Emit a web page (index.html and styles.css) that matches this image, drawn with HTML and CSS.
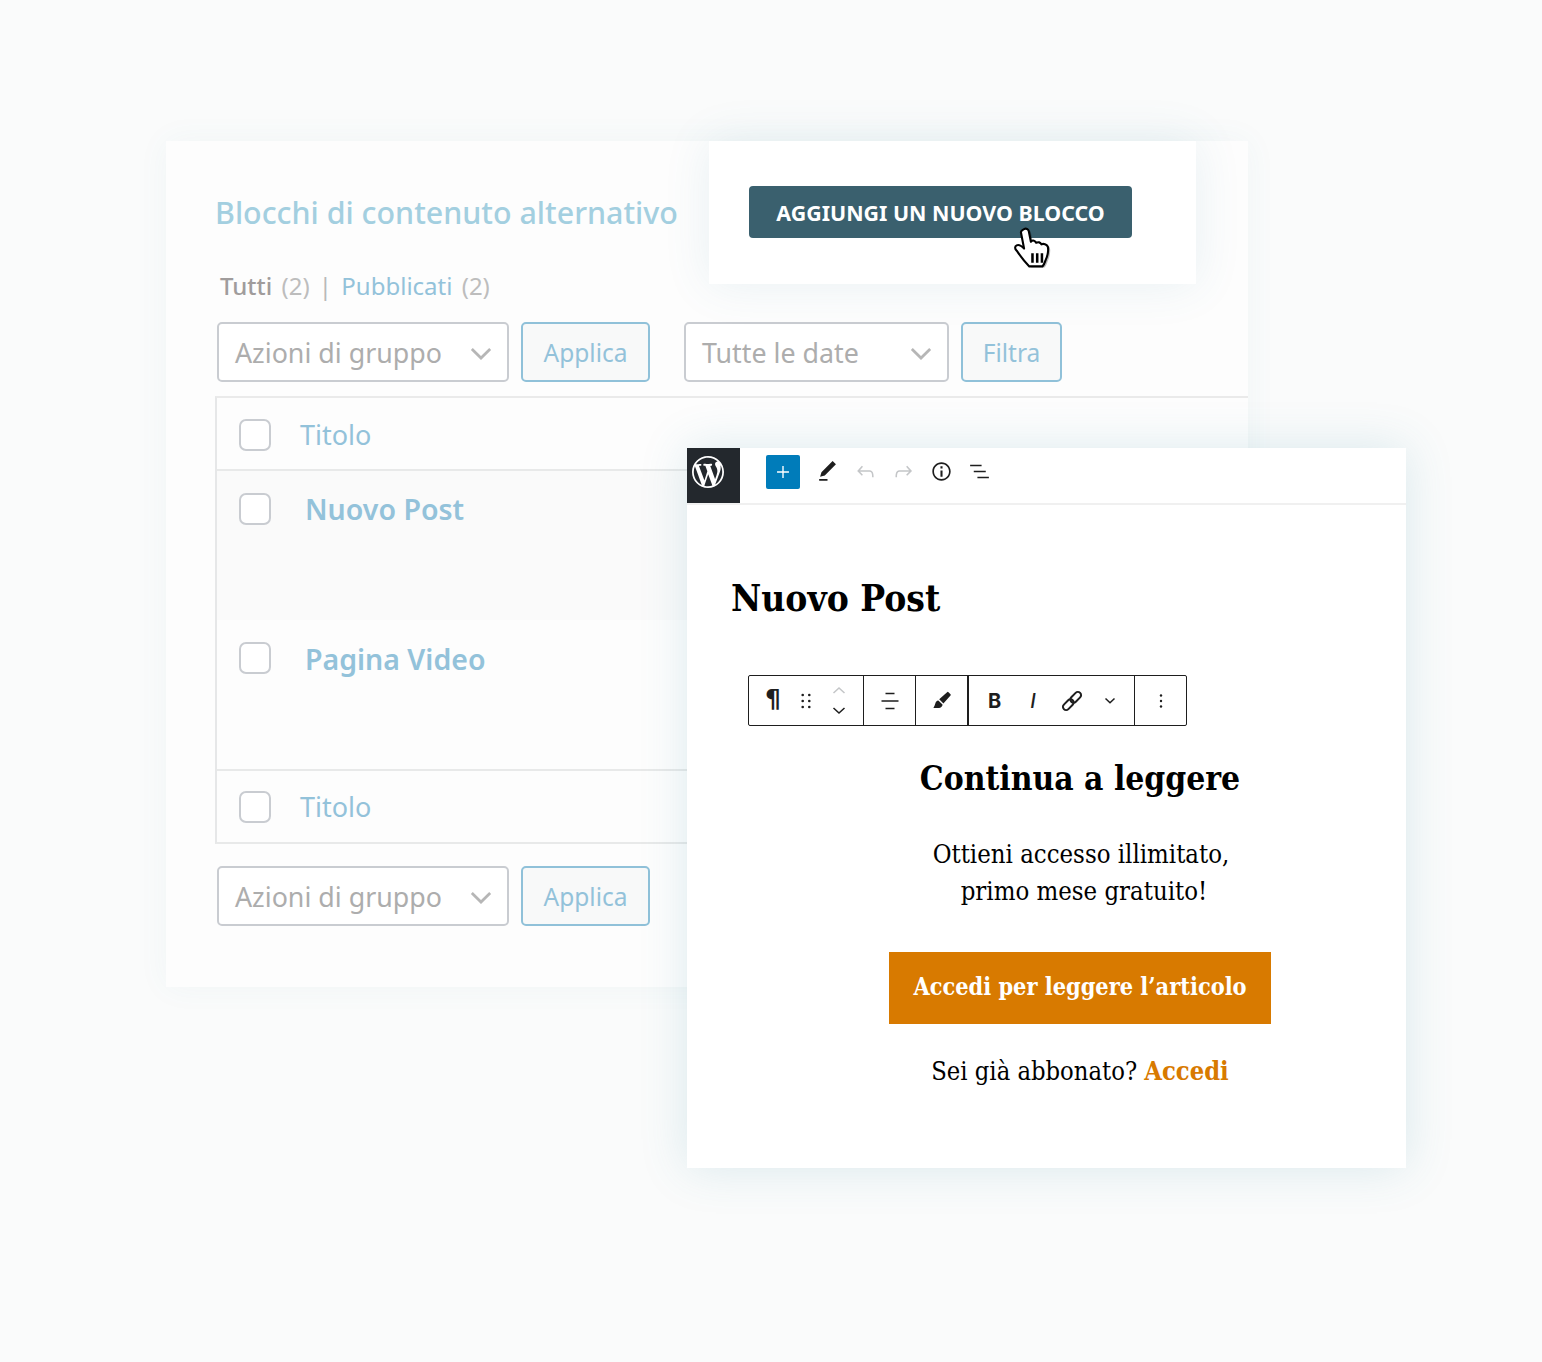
FILE: index.html
```html
<!DOCTYPE html>
<html lang="it">
<head>
  <meta charset="UTF-8" />
  <meta name="viewport" content="width=device-width, initial-scale=1" />
  <title>Blocchi di contenuto alternativo</title>
  <link rel="stylesheet" href="styles.css">
</head>
<body>
  <div class="scene">

    <!-- admin list, behind everything -->
    <div class="window list-window">
      <h1 class="list-title">Blocchi di contenuto alternativo</h1>
      <div class="views">
        <strong>Tutti</strong> <span class="count">(2)</span>
        <span class="sep">|</span>
        <a>Pubblicati</a> <span class="count">(2)</span>
      </div>

      <div class="tablenav">
        <div class="select select-actions">Azioni di gruppo
          <svg class="caret" viewBox="0 0 24 14"><path d="M2 2l10 10L22 2"/></svg>
        </div>
        <div class="btn btn-apply">Applica</div>
        <div class="select select-dates">Tutte le date
          <svg class="caret" viewBox="0 0 24 14"><path d="M2 2l10 10L22 2"/></svg>
        </div>
        <div class="btn btn-filter">Filtra</div>
      </div>

      <div class="table">
        <div class="row row-head">
          <span class="check"></span><span class="col-title">Titolo</span>
        </div>
        <div class="row row-post row-alt">
          <span class="check"></span><a class="post-title">Nuovo Post</a>
        </div>
        <div class="row row-post row-second">
          <span class="check"></span><a class="post-title">Pagina Video</a>
        </div>
        <div class="row row-foot">
          <span class="check"></span><span class="col-title">Titolo</span>
        </div>
      </div>

      <div class="tablenav tablenav-bottom">
        <div class="select select-actions">Azioni di gruppo
          <svg class="caret" viewBox="0 0 24 14"><path d="M2 2l10 10L22 2"/></svg>
        </div>
        <div class="btn btn-apply">Applica</div>
      </div>
    </div>

    <!-- add block card -->
    <div class="window add-window">
      <div class="add-button">AGGIUNGI UN NUOVO BLOCCO</div>
    </div>
    <svg class="hand" viewBox="0 0 35 39">
      <path class="hand-shadow" d="M11 3c2-1 4 0 4.500 2l2 10c2-2 4-1 5 1 2-1 4-.500 5 1.500 2-1 5 0 6 2 1 3 0 9-2 13-1 3-2 5-3 6H16c-3-3-8-9-13-15-2-2-2-4 0-5 2-1 4 0 7 3L8 6c0-1 1-2 3-3z"/>
      <path class="hand-fill" d="M9 2c2-1 4 0 4.500 2l2 10c2-2 4-1 5 1 2-1 4-.500 5 1.500 2-1 5 0 6 2 1 3 0 9-2 13-1 3-2 5-3 6H14c-3-3-8-9-12-15-2-2-2-4 0-5 2-1 4 0 7 3L6 5c0-1 1-2 3-3z"/>
      <path class="hand-lines" d="M17 25v9M21.500 25v9M26 25v9"/>
    </svg>

    <!-- block editor -->
    <div class="window editor-window">
      <div class="editor-bar">
        <div class="wp-logo">
          <svg viewBox="0 0 20 20"><path d="M20 10c0-5.510-4.490-10-10-10C4.480 0 0 4.490 0 10c0 5.520 4.480 10 10 10 5.510 0 10-4.480 10-10zM7.780 15.370L4.370 6.220c.550-.020 1.170-.080 1.170-.080.500-.060.440-1.130-.060-1.110 0 0-1.450.110-2.370.110-.180 0-.370 0-.580-.010C4.120 2.690 6.870 1.110 10 1.110c2.330 0 4.450.870 6.050 2.340-.680-.110-1.650.390-1.650 1.580 0 .740.450 1.360.900 2.100.350.610.550 1.360.550 2.460 0 1.490-1.400 5-1.400 5l-3.030-8.370c.540-.020.820-.170.820-.170.500-.050.440-1.250-.060-1.220 0 0-1.440.120-2.380.120-.870 0-2.330-.120-2.330-.120-.500-.030-.560 1.200-.060 1.220l.920.080 1.260 3.410zM17.410 10c.240-.640.740-1.870.430-4.250.700 1.290 1.050 2.710 1.050 4.250 0 3.290-1.730 6.240-4.400 7.780.970-2.590 1.940-5.200 2.920-7.780zM6.100 18.090C3.120 16.650 1.110 13.530 1.110 10c0-1.300.230-2.480.720-3.590C3.250 10.300 4.670 14.200 6.100 18.090zm4.030-6.630l2.580 6.980c-.860.290-1.760.450-2.710.450-.790 0-1.570-.110-2.290-.330.810-2.380 1.620-4.740 2.420-7.100z"/></svg>
        </div>
        <div class="bar-tools">
          <span class="add-block">
            <svg viewBox="0 0 24 24"><path d="M12 5.500v13M5.500 12h13"/></svg>
          </span>
          <svg class="bar-icon" viewBox="0 0 24 24"><path d="M20.100 5.100L16.900 2 6.200 12.700l-1.300 4.400 4.500-1.300L20.100 5.100zM4 20.800h8v-1.500H4v1.500z"/></svg>
          <svg class="bar-icon faded" viewBox="0 0 24 24"><path d="M18.300 11.700c-.600-.600-1.400-.900-2.300-.900H6.700l2.900-3.300-1.100-1-4.500 5L8.500 16l1-1-2.700-2.700H16c.500 0 .900.200 1.300.500 1 1 1 3.400 1 4.500v.300h1.500v-.200c0-1.500 0-4.300-1.500-5.700z"/></svg>
          <svg class="bar-icon faded" viewBox="0 0 24 24"><path d="M15.600 6.500l-1.100 1 2.900 3.300H8c-.900 0-1.700.300-2.300.900-1.400 1.500-1.400 4.200-1.400 5.600v.200h1.500v-.300c0-1.100 0-3.500 1-4.500.300-.300.700-.500 1.300-.500h9.200L14.500 15l1.100 1.100 4.600-4.600-4.600-5z"/></svg>
          <svg class="bar-icon" viewBox="0 0 24 24"><path d="M12 3.200c-4.800 0-8.800 3.900-8.800 8.800 0 4.800 3.900 8.800 8.800 8.800 4.800 0 8.800-3.900 8.800-8.800 0-4.800-4-8.800-8.800-8.800zm0 16c-4 0-7.200-3.300-7.200-7.200C4.800 8 8 4.800 12 4.800s7.200 3.300 7.200 7.200c0 4-3.200 7.200-7.200 7.200zM11 17h2v-6h-2v6zm0-8h2V7h-2v2z"/></svg>
          <svg class="bar-icon" viewBox="0 0 24 24"><path d="M3 5.500h11V7H3zM6.500 11.200H18v1.500H6.500zM10 17h11v1.500H10z"/></svg>
        </div>
      </div>

      <div class="editor-body">
        <h2 class="post-heading">Nuovo Post</h2>

        <div class="block-toolbar">
          <div class="tb-group tb-first">
            <span class="tb-glyph tb-pilcrow">¶</span>
            <svg class="tb-drag" viewBox="0 0 12 16"><circle cx="2.700" cy="2" r="1.300"/><circle cx="9.300" cy="2" r="1.300"/><circle cx="2.700" cy="8" r="1.300"/><circle cx="9.300" cy="8" r="1.300"/><circle cx="2.700" cy="14" r="1.300"/><circle cx="9.300" cy="14" r="1.300"/></svg>
            <svg class="tb-mover" viewBox="0 0 14 30"><path class="up" d="M1.500 7L7 2l5.500 5"/><path d="M1.500 22L7 27l5.500-5"/></svg>
          </div>
          <div class="tb-group tb-align">
            <svg class="tb-icon" viewBox="0 0 20 20"><path class="thin" d="M5.500 2.500h9M1.500 10h17M5.500 17.500h9"/></svg>
          </div>
          <div class="tb-group tb-style">
            <svg class="tb-icon" viewBox="0 0 20 20"><path d="M18.500 3.200l-2-2a1 1 0 0 0-1.400 0L7.200 8.200l4.200 4.300 7.100-7.900a1 1 0 0 0 0-1.400zM6.300 9.400c-1.700.300-2.500 1.400-2.900 2.800-.400 1.400-1 3.100-2 4.800h5.800c2.300-.800 3.500-2.300 3.300-3.600z"/></svg>
          </div>
          <div class="tb-group tb-format">
            <span class="tb-glyph tb-bold">B</span>
            <span class="tb-glyph tb-italic">I</span>
            <svg class="tb-icon tb-link" viewBox="0 0 20 20"><g class="thin link-chain" transform="rotate(-45 10 10)"><rect x="-1.500" y="6.800" width="12.500" height="6.400" rx="3.200"/><rect x="9" y="6.800" width="12.500" height="6.400" rx="3.200"/></g></svg>
            <svg class="tb-more" viewBox="0 0 12 8"><path d="M1.500 1.500L6 5.800l4.500-4.300"/></svg>
          </div>
          <div class="tb-group tb-options">
            <svg class="tb-drag" viewBox="0 0 4 16"><circle cx="2" cy="2.500" r="1.200"/><circle cx="2" cy="8" r="1.200"/><circle cx="2" cy="13.500" r="1.200"/></svg>
          </div>
        </div>

        <div class="paywall">
          <h3>Continua a leggere</h3>
          <p class="paywall-text">Ottieni accesso illimitato,<br><span class="line-two">primo mese gratuito!</span></p>
          <a class="paywall-button">Accedi per leggere l’articolo</a>
          <p class="paywall-login">Sei già abbonato? <a>Accedi</a></p>
        </div>
      </div>
    </div>

  </div>
</body>
</html>
```

FILE: styles.css
```css
* {
  box-sizing: border-box;
}
html, body {
  margin: 0;
  background-color: #fafbfb;
}
body {
  font-family: "Noto Sans", "Open Sans", sans-serif;
  color: #111;
}
h1, h2, h3, p {
  margin: 0;
  font-weight: normal;
}
.scene {
  position: relative;
  height: 1362px;
  overflow: hidden;
}
.window {
  position: absolute;
  box-shadow: 0 0 44px rgba(60, 140, 165, 0.11);
}

/* admin list */
.list-window {
  left: 166px;
  top: 141px;
  width: 1082px;
  height: 846px;
  padding: 50px 0 0 49px;
  background-color: #fdfdfd;
  box-shadow: 0 0 30px rgba(60, 140, 165, 0.05);
}
.list-title {
  height: 44px;
  font-size: 30.400px;
  font-weight: 500;
  line-height: 44px;
  color: #a3cfe0;
  white-space: nowrap;
}
.views {
  margin: 36px 0 0 5px;
  height: 30px;
  font-size: 24px;
  line-height: 30px;
  color: #bdbdbd;
}
.views strong {
  margin-right: 3px;
  font-weight: 500;
  color: #a09c9c;
}
.views a {
  margin-right: 3px;
  color: #93c2da;
}
.views .sep {
  margin: 0 3px;
  color: #b9b9b9;
}
.tablenav {
  display: flex;
  margin: 21px 0 0 2px;
  height: 60px;
}
.tablenav-bottom {
  margin-top: 22px;
}
.select {
  position: relative;
  display: flex;
  align-items: center;
  padding-left: 16px;
  font-size: 26.800px;
  color: #adadad;
  background-color: #fff;
  border: 2px solid #c9ccd1;
  border-radius: 5px;
}
.select-actions {
  width: 292px;
}
.select-dates {
  width: 265px;
  margin-left: 34px;
}
.caret {
  position: absolute;
  right: 15px;
  top: 23px;
  width: 22px;
  height: 13px;
  fill: none;
  stroke: #b6b6b6;
  stroke-width: 3;
}
.btn {
  display: flex;
  align-items: center;
  justify-content: center;
  margin-left: 12px;
  font-size: 24.500px;
  color: #93c2da;
  background-color: #f8f9f9;
  border: 2px solid #90c1d9;
  border-radius: 5px;
}
.btn-apply {
  width: 129px;
}
.btn-filter {
  width: 101px;
}
.table {
  margin-top: 14px;
  border-top: 2px solid #eaeaea;
  border-left: 2px solid #e6e7e8;
  border-bottom: 2px solid #e8e9e9;
}
.row {
  display: flex;
  padding-left: 22px;
}
.row-head {
  height: 73px;
  padding-top: 21px;
  border-bottom: 2px solid #e8e9e9;
}
.row-post {
  height: 149px;
  padding-top: 22px;
}
.row-second .post-title {
  margin-top: 1px;
}
.row-alt {
  background-color: #fafafa;
}
.row-foot {
  height: 73px;
  padding-top: 20px;
  border-top: 2px solid #e8e9e9;
}
.check {
  flex: none;
  width: 32px;
  height: 32px;
  background-color: #fff;
  border: 2px solid #c9ccd1;
  border-radius: 7px;
}
.col-title {
  margin-left: 29px;
  font-size: 27px;
  line-height: 32px;
  color: #93c2da;
}
.post-title {
  margin-left: 34px;
  font-size: 28.500px;
  font-weight: 600;
  line-height: 32px;
  color: #93c2da;
}

/* add block card */
.add-window {
  left: 709px;
  top: 141px;
  width: 487px;
  height: 143px;
  padding: 45px 0 0 40px;
  background-color: #fff;
}
.add-button {
  width: 383px;
  height: 52px;
  font-size: 21.400px;
  font-weight: 700;
  line-height: 53px;
  text-align: center;
  color: #fff;
  background-color: #3a606e;
  border-radius: 4px;
  white-space: nowrap;
}
.hand {
  position: absolute;
  left: 1013px;
  top: 227px;
  width: 40px;
  height: 41px;
  overflow: visible;
}
.hand-shadow {
  fill: rgba(0, 0, 0, 0.28);
}
.hand-fill {
  fill: #fff;
  stroke: #000;
  stroke-width: 2;
  stroke-linejoin: round;
}
.hand-lines {
  fill: none;
  stroke: #000;
  stroke-width: 2.400;
}

/* block editor */
.editor-window {
  left: 687px;
  top: 448px;
  width: 719px;
  height: 720px;
  background-color: #fff;
  box-shadow: 0 0 44px rgba(60, 140, 165, 0.17);
}
.editor-bar {
  display: flex;
  height: 57px;
  border-bottom: 2px solid #f0f0f0;
}
.wp-logo {
  width: 53px;
  height: 55px;
  padding: 8px 0 0 5px;
  background-color: #23282d;
}
.wp-logo svg {
  display: block;
  width: 32px;
  height: 32px;
  fill: #fff;
}
.bar-tools {
  display: flex;
  align-items: center;
  gap: 13px;
  height: 48px;
  padding-left: 26px;
}
.add-block {
  display: block;
  width: 34px;
  height: 34px;
  margin-right: 2px;
  background-color: #007cba;
  border-radius: 2px;
}
.add-block svg {
  display: block;
  width: 34px;
  height: 34px;
  padding: 6px;
  fill: none;
  stroke: #fff;
  stroke-width: 1.500;
}
.bar-icon {
  width: 25px;
  height: 25px;
  margin-bottom: 2px;
  fill: #1e1e1e;
}
.bar-icon.faded {
  fill: #c4c6c8;
}
.editor-body {
  padding: 70px 0 0 44px;
}
.post-heading {
  font-family: "DejaVu Serif Condensed", "DejaVu Serif", serif;
  font-size: 36.800px;
  font-weight: bold;
  line-height: 46px;
  color: #000;
}
.block-toolbar {
  display: flex;
  width: 439px;
  height: 51px;
  margin: 54px 0 0 17px;
  background-color: #fff;
  border: 1px solid #1e1e1e;
  border-radius: 2px;
}
.tb-group {
  position: relative;
  display: flex;
  align-items: center;
  border-right: 1px solid #1e1e1e;
}
.tb-first {
  width: 115px;
  padding-left: 16px;
}
.tb-align {
  width: 52px;
  justify-content: center;
}
.tb-style {
  width: 53px;
  justify-content: center;
  border-right-width: 2px;
}
.tb-format {
  width: 166px;
  padding-left: 19px;
}
.tb-options {
  flex: 1;
  justify-content: center;
  border-right: none;
}
.tb-glyph {
  font-family: "Inter", "Noto Sans", sans-serif;
  font-size: 20px;
  font-weight: 700;
  line-height: 24px;
  color: #1e1e1e;
}
.tb-pilcrow {
  width: 16px;
  margin-top: -3px;
  font-family: "DejaVu Sans", sans-serif;
  font-size: 25px;
  text-align: center;
}
.tb-italic {
  margin-left: 29px;
  font-weight: 500;
  font-style: italic;
}
.tb-drag {
  width: 12px;
  height: 16px;
  margin-left: 19px;
  fill: #1e1e1e;
}
.tb-options .tb-drag {
  width: 4px;
  margin-left: 0;
}
.tb-mover {
  width: 14px;
  height: 30px;
  margin-left: 20px;
  fill: none;
  stroke: #1e1e1e;
  stroke-width: 1.500;
}
.tb-mover .up {
  stroke: #c4c6c8;
}
.tb-icon {
  width: 20px;
  height: 20px;
  fill: #1e1e1e;
  overflow: visible;
}
.thin {
  fill: none;
  stroke: #1e1e1e;
  stroke-width: 1.700;
}
.link-chain {
  stroke-width: 2;
}
.tb-link {
  margin-left: 26px;
}
.tb-more {
  width: 12px;
  height: 8px;
  margin-left: 22px;
  fill: none;
  stroke: #1e1e1e;
  stroke-width: 1.500;
}
.paywall {
  width: 382px;
  margin: 26px 0 0 158px;
  font-family: "DejaVu Serif Condensed", "DejaVu Serif", serif;
  text-align: center;
  color: #000;
}
.paywall h3 {
  font-size: 33.300px;
  font-weight: bold;
  line-height: 54px;
}
.paywall-text {
  margin-top: 30px;
  padding-left: 2px;
  font-size: 25.500px;
  line-height: 37px;
}
.line-two {
  margin-left: 6px;
}
.paywall-button {
  display: block;
  height: 72px;
  margin-top: 42px;
  font-size: 23.300px;
  font-weight: bold;
  line-height: 70px;
  color: #fff;
  background-color: #d87a00;
  white-space: nowrap;
}
.paywall-login {
  margin-top: 28px;
  font-size: 25.300px;
  line-height: 38px;
}
.paywall-login a {
  font-weight: bold;
  color: #d87a00;
}
```
